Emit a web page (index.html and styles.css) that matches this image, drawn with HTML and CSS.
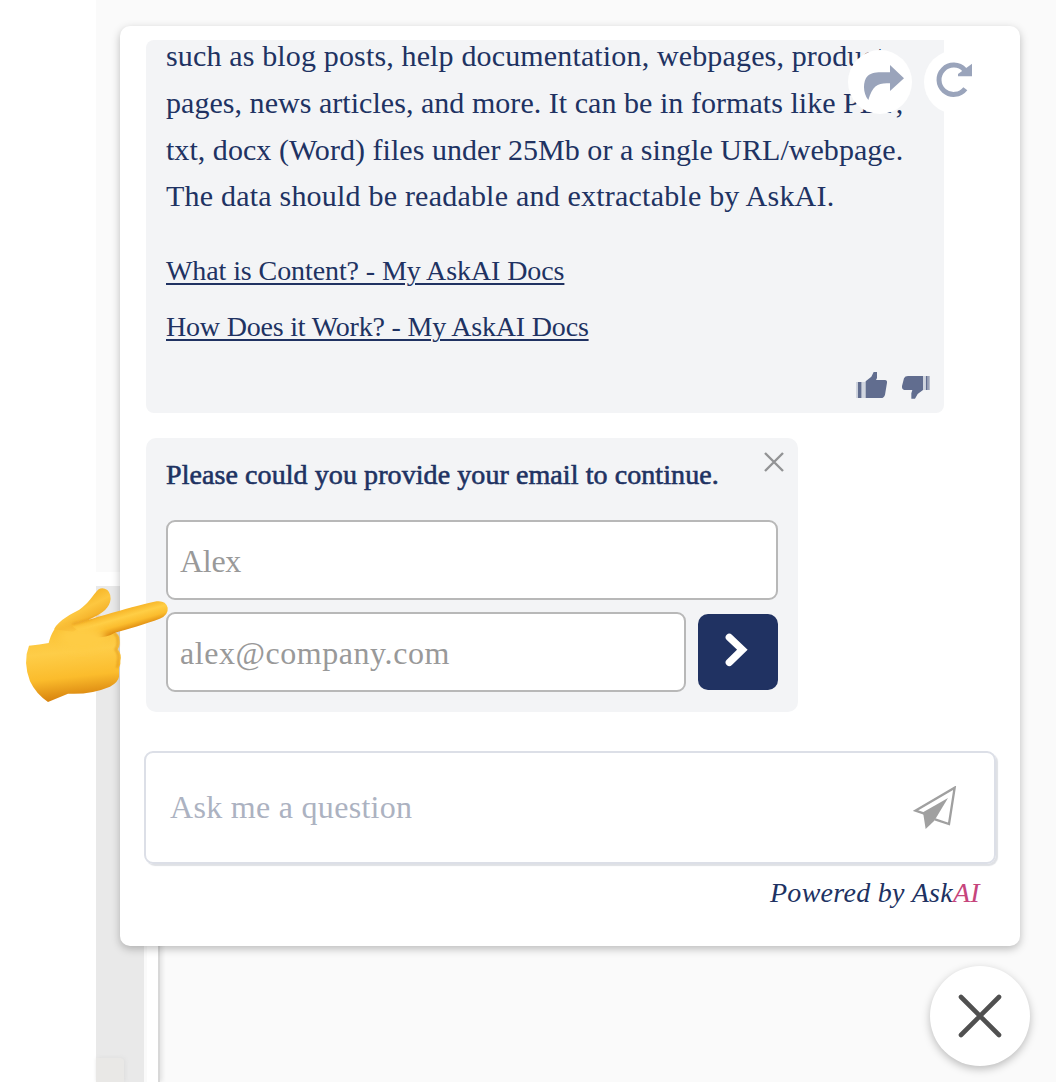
FILE: index.html
```html
<!DOCTYPE html>
<html lang="en">
<head>
<meta charset="utf-8">
<title>AskAI chat</title>
<link rel="stylesheet" href="styles.css">
</head>
<body>
<div class="backdrop">
  <div class="strip"><div class="strip-top"></div><div class="strip-band"></div><div class="strip-panel"></div></div>
  <div class="rail"></div>
  <div class="chip"></div>
</div>

<main class="widget">
  <div class="actions">
    <button class="action" aria-label="Share"><svg width="64" height="64" viewBox="84 90 192 192"><path d="M210 135L252 175L210 213V190C175 188 158 195 145 240C128 220 128 182 143 168C158 155 180 157 210 157Z" fill="#9aa4bb"/></svg></button>
    <button class="action" aria-label="Restart"><svg width="64" height="64" viewBox="312 90 192 192"><path d="M436 206A44 44 0 1 1 434 150" fill="none" stroke="#9aa4bb" stroke-width="15"/><path d="M456 131V169H414V162Z" fill="#9aa4bb"/></svg></button>
  </div>

  <section class="answer">
    <p class="text"><span class="l1">such as blog posts, help documentation, webpages, product</span><br><span class="l2">pages, news articles, and more. It can be in formats like PDF,</span><br><span class="l3">txt, docx (Word) files under 25Mb or a single URL/webpage.</span><br><span class="l4">The data should be readable and extractable by AskAI.</span></p>
    <a class="source s1" href="#">What is Content? - My AskAI Docs</a>
    <a class="source s2" href="#">How Does it Work? - My AskAI Docs</a>
    <div class="votes">
      <svg width="34" height="30" viewBox="46 33 102 90" fill="#616d8f"><path d="M54 66H66V114H54Z"/><path d="M49 66H54V114H49ZM66 66H78V114H66Z" fill="#d0d5df"/><path d="M78 64L95 50L102 36H112V54L109 60H136Q143 60 142 68L136 104Q133 114 124 114H78Z"/></svg>
      <svg width="30" height="30" viewBox="184 33 90 90" fill="#616d8f"><path d="M258 48H264V90H258Z"/><path d="M250 48H258V90H250Z" fill="#d0d5df"/><path d="M264 48H270V90H264Z" fill="#9aa2b7"/><path d="M250 48V90L234 102L226 116H215V100L218 90H194Q186 88 187 78L193 55Q196 48 205 48Z"/></svg>
    </div>
  </section>

  <form class="lead">
    <div class="lead-head"><span class="prompt">Please could you provide your email to continue.</span>
      <svg width="22" height="22" viewBox="0 0 22 22"><path d="M2 2L20 20M20 2L2 20" stroke="#929395" stroke-width="2.4"/></svg></div>
    <div class="field"><span class="f1">Alex</span></div>
    <div class="row">
      <div class="field email"><span class="f2">alex@company.com</span></div>
      <button class="next" aria-label="Continue"><svg width="80" height="76" viewBox="54 552 240 228"><path d="M148 622L187 659L148 697" fill="none" stroke="#fff" stroke-width="22" stroke-linecap="round"/></svg></button>
    </div>
  </form>

  <div class="ask">
    <span class="placeholder">Ask me a question</span>
    <svg width="44" height="44" viewBox="70 136 132 132"><path d="M104 219L77 210L195 141L178 250L136 236" fill="none" stroke="#a0a0a0" stroke-width="7"/><path d="M100 215L175 172L134 240L108 265Z" fill="#a0a0a0"/></svg>
  </div>
  <div class="powered"><span class="brand">Powered by Ask<em>AI</em></span></div>
</main>

<button class="launcher" aria-label="Close chat"><svg width="44" height="44" viewBox="0 0 44 44"><path d="M3 3L41 41M41 3L3 41" stroke="#505050" stroke-width="4.6" stroke-linecap="round"/></svg></button>

<svg class="hand" width="170" height="160" viewBox="0 0 510 480">
  <defs>
    <linearGradient id="palm" x1="0" y1="0" x2="0.12" y2="1"><stop offset="0" stop-color="#f9bc2b"/><stop offset=".45" stop-color="#fecd48"/><stop offset=".75" stop-color="#fbbc2c"/><stop offset="1" stop-color="#d9850f"/></linearGradient>
    <linearGradient id="finger" gradientUnits="userSpaceOnUse" x1="315" y1="150" x2="334" y2="216"><stop offset="0" stop-color="#f5ae20"/><stop offset=".4" stop-color="#ffce45"/><stop offset=".7" stop-color="#fbbd2e"/><stop offset="1" stop-color="#dd890f"/></linearGradient>
    <linearGradient id="thumb" x1="0.3" y1="0.2" x2="0.7" y2="0.8"><stop offset="0" stop-color="#f3ae1e"/><stop offset=".5" stop-color="#fdc740"/><stop offset="1" stop-color="#f0a71f"/></linearGradient>
    <filter id="soft" x="-30%" y="-30%" width="160%" height="160%"><feGaussianBlur stdDeviation="3"/></filter>
    <filter id="softer" x="-40%" y="-40%" width="180%" height="180%"><feGaussianBlur stdDeviation="11"/></filter>
  </defs>
  <path d="M57 257Q90 254 116 249C123 222 135 196 170 174L315 217Q329 226 328 238Q332 254 323 268Q336 284 331 302Q333 312 327 322V350Q325 366 300 380Q240 405 174 401L114 426Q78 402 60 364Q38 305 57 257Z" fill="url(#palm)"/>
  <path d="M132 208C145 180 188 160 208 149C235 132 248 105 266 88Q278 80 292 90Q306 103 300 127C293 151 268 164 239 178L190 215Z" fill="url(#thumb)"/>
  <path d="M184 195C220 184 390 133 440 124Q467 121 473 143Q476 165 449 176C410 191 350 208 313 219C270 245 220 230 184 195Z" fill="url(#finger)"/>
  <path d="M148 220Q185 198 245 204Q292 215 288 240Q250 285 190 270Q150 255 148 220Z" fill="#fecc45" filter="url(#softer)"/>
  <path d="M188 192Q235 182 268 165" fill="none" stroke="#d98c18" stroke-width="4" opacity=".65" filter="url(#soft)"/>
  <path d="M312 219Q326 229 323 243Q326 257 317 268Q330 286 324 305Q326 312 321 323" fill="none" stroke="#d88710" stroke-width="6" opacity=".6" filter="url(#soft)"/>
</svg>
</body>
</html>
```
FILE: styles.css
```css
* { box-sizing: border-box; }
body {
  position: relative;
  width: 1056px;
  height: 1082px;
  margin: 0;
  padding: 26px 26px 0 120px;
  overflow: hidden;
  background: #fff;
  color: #203262;
  font-family: "Liberation Serif", serif;
  font-size: 30px;
}
button { padding: 0; border: 0; background: none; }
svg { display: block; }

.backdrop {
  position: absolute;
  inset: 0 0 0 96px;
  background: #fafafa;
}
.strip { display: flex; flex-direction: column; width: 48px; height: 100%; }
.strip-top { height: 572px; }
.strip-band { height: 14px; background: #fff; }
.strip-panel { flex: 1; background: #e9e9e9; }
.rail {
  position: absolute;
  left: 51px;
  top: 900px;
  bottom: 0;
  width: 11px;
  background: #fff;
  box-shadow: 2px 0 0 #d8d8d8, 4px 0 4px #e0e0e0;
}
.chip {
  position: absolute;
  left: 0;
  top: 1058px;
  width: 28px;
  height: 24px;
  border-radius: 0 4px 0 0;
  background: #e9e8e6;
  box-shadow: 1px 0 4px #dcdcdc;
}

.widget {
  position: relative;
  display: flex;
  flex-direction: column;
  width: 900px;
  height: 920px;
  padding: 14px 24px 0 26px;
  border-radius: 10px;
  background: #fff;
  box-shadow: 0 3px 9px rgba(0, 0, 0, .25);
}
.actions {
  position: absolute;
  left: 728px;
  top: 24px;
  display: flex;
  gap: 12px;
}
.action { width: 64px; height: 64px; border-radius: 50%; background: #fff; }

.answer {
  display: flex;
  flex-direction: column;
  align-items: flex-start;
  width: 798px;
  height: 373px;
  padding-left: 20px;
  border-radius: 8px 0 8px 8px;
  background: #f3f4f6;
}
.text { margin: -7px 0 0; line-height: 46.8px; white-space: nowrap; }
.l1 { letter-spacing: .15px; }
.l2, .l3 { letter-spacing: .04px; }
.l4 { letter-spacing: .21px; }
.source {
  height: 56px;
  color: inherit;
  font-size: 28px;
  line-height: 56px;
  text-decoration-thickness: 2px;
  text-underline-offset: 3px;
  white-space: nowrap;
}
.s1 { margin-top: 23px; letter-spacing: -.09px; }
.s2 { letter-spacing: -.19px; }
.votes { display: flex; align-self: flex-end; gap: 12px; margin: 16px 13px 0 0; }

.lead {
  display: flex;
  flex-direction: column;
  width: 652px;
  height: 274px;
  margin: 25px 0 0;
  padding: 0 20px;
  border-radius: 10px;
  background: #f3f4f6;
}
.lead-head {
  display: flex;
  justify-content: space-between;
  height: 82px;
  margin-right: -7px;
  padding-top: 13px;
  font-size: 28px;
  line-height: 48px;
}
.prompt { letter-spacing: .08px; -webkit-text-stroke: .6px #203262; white-space: nowrap; }
.field {
  height: 80px;
  padding-left: 12px;
  border: 2px solid #b8b8b8;
  border-radius: 9px;
  background: #fff;
  color: #999;
  font-size: 32px;
  line-height: 78px;
}
.f1 { letter-spacing: -.3px; }
.f2 { letter-spacing: .55px; }
.row { display: flex; gap: 12px; margin-top: 12px; }
.email { width: 520px; }
.next { width: 80px; height: 76px; margin-top: 2px; border-radius: 10px; background: #203262; }

.ask {
  display: flex;
  align-items: center;
  justify-content: space-between;
  height: 113px;
  margin: 39px 0 0 -2px;
  padding: 0 37px 0 24px;
  border: 2px solid #dcdfe7;
  border-radius: 9px;
  box-shadow: 2px 2px 1px #dfe1e5;
  color: #acb2c1;
  font-size: 32px;
}
.placeholder { letter-spacing: .3px; }
.powered {
  margin: 9px 16px 0 0;
  font-size: 28px;
  font-style: italic;
  line-height: 40px;
  letter-spacing: .3px;
  text-align: right;
}
.powered em { color: #c6457c; }
.launcher {
  position: relative;
  display: flex;
  align-items: center;
  justify-content: center;
  width: 100px;
  height: 100px;
  margin: 20px 0 0 auto;
  border-radius: 50%;
  background: #fff;
  box-shadow: 0 3px 8px rgba(0, 0, 0, .25);
}
.hand { position: absolute; left: 10px; top: 560px; }
```
